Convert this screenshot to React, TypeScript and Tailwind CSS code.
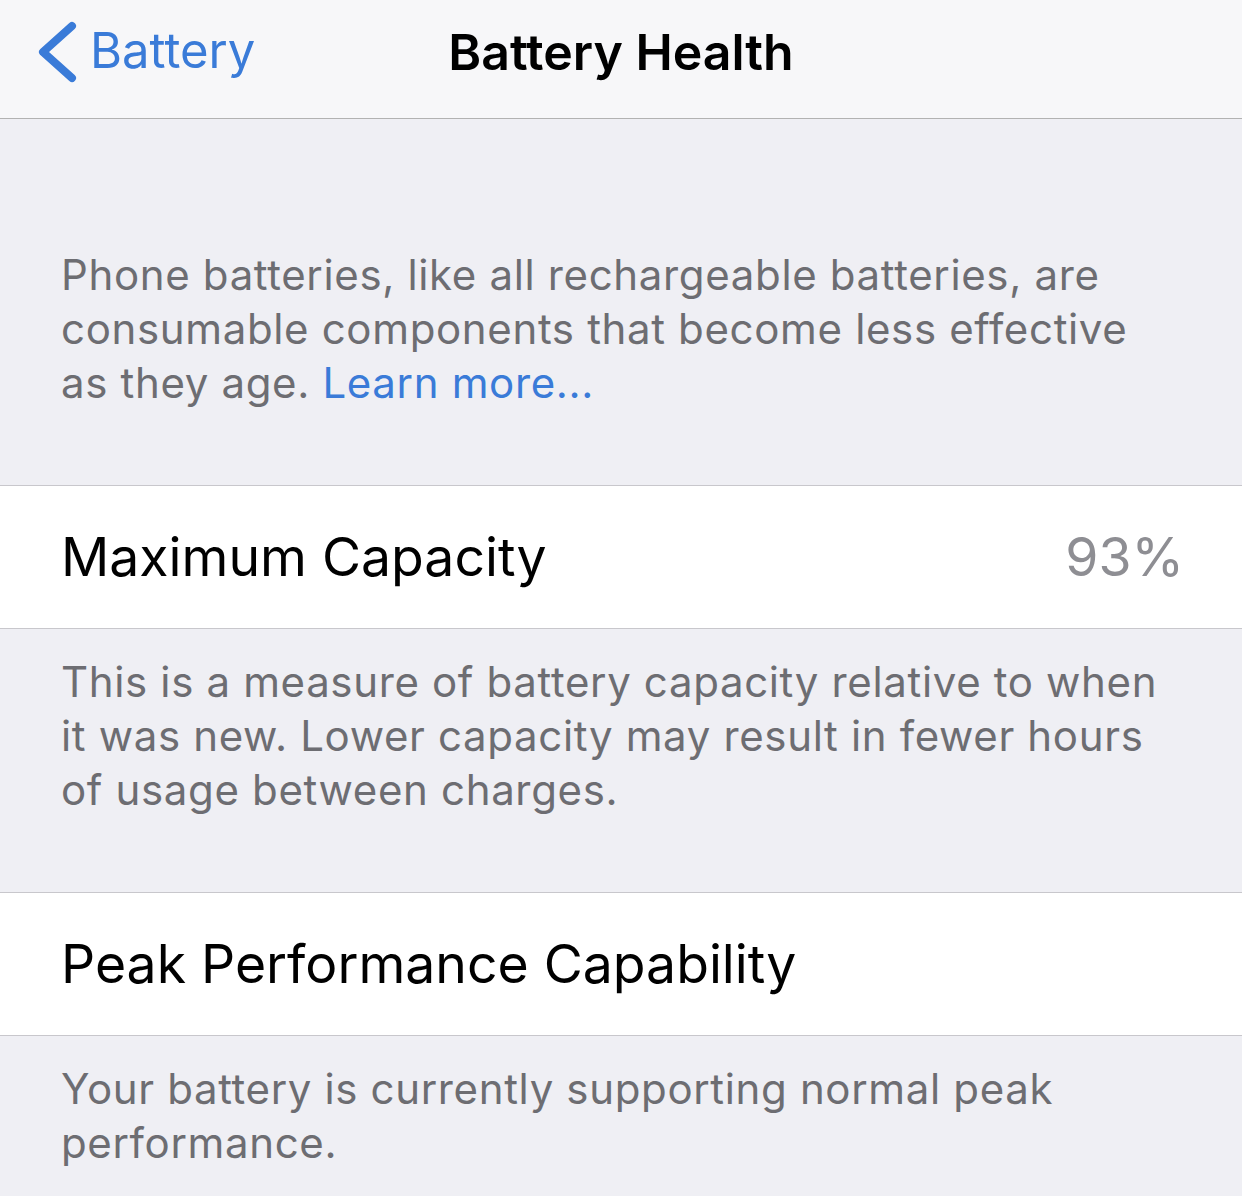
const font = { fontFamily: 'Inter, "Liberation Sans", sans-serif' };

function Footer({ children, className = '' }: { children: React.ReactNode; className?: string }) {
  return (
    <div className={`pl-[61px] pr-[74px] text-[42px] leading-[54px] text-[#6d6d72] tracking-[0.65px] ${className}`}>
      {children}
    </div>
  );
}

function Row({ label, value }: { label: string; value?: string }) {
  return (
    <div className="flex h-[144px] items-center justify-between border-y border-[#c8c7cc] bg-white pl-[61px] pr-[58px]">
      <span className="text-[53.5px] text-black">{label}</span>
      {value && <span className="text-[53.5px] text-[#8e8e93]">{value}</span>}
    </div>
  );
}

export default function App() {
  return (
    <div className="min-h-[1196px] w-[1242px] overflow-hidden bg-[#efeff4]" style={font}>
      <header className="relative flex h-[119px] items-start border-b border-[#b2b2b2] bg-[#f7f7f9] pt-[21px]">
        <div className="flex items-center pl-[37px] text-[#3a7bd8]">
          <svg width="42" height="62" viewBox="0 0 42 62" fill="none" className="mr-[11px]">
            <polyline
              points="35,5 6,31 35,57"
              stroke="currentColor"
              strokeWidth="8"
              strokeLinecap="round"
              strokeLinejoin="round"
            />
          </svg>
          <span className="-mt-[4px] text-[49px] leading-none">Battery</span>
        </div>
        <h1 className="absolute left-1/2 top-[27px] -translate-x-1/2 text-[50px] font-semibold leading-none text-black">
          Battery Health
        </h1>
      </header>

      <Footer className="pb-[75px] pt-[129px]">
        Phone batteries, like all rechargeable batteries, are consumable components that become less
        effective as they age. <span className="text-[#3a7bd8]">Learn more...</span>
      </Footer>

      <Row label="Maximum Capacity" value="93%" />

      <Footer className="pb-[75px] pt-[26px]">
        This is a measure of battery capacity relative to when it was new. Lower capacity may result in
        fewer hours of usage between charges.
      </Footer>

      <Row label="Peak Performance Capability" />

      <Footer className="pt-[26px]">
        Your battery is currently supporting normal peak performance.
      </Footer>
    </div>
  );
}
